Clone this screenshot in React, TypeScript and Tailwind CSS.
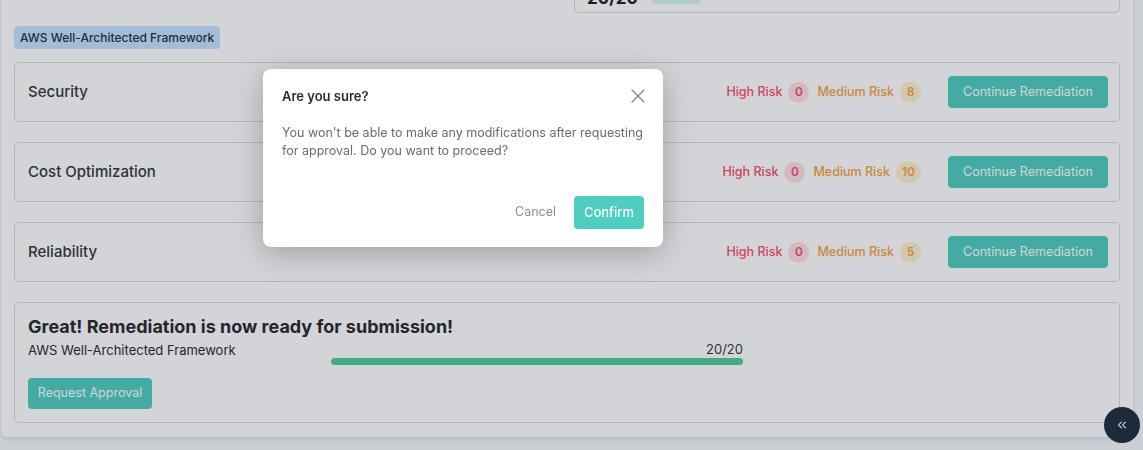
import { ChevronsLeft, X } from "lucide-react"

const pillars = [
  { name: "Security", high: 0, medium: 8 },
  { name: "Cost Optimization", high: 0, medium: 10 },
  { name: "Reliability", high: 0, medium: 5 },
]

function RiskCount({ value, tone }: { value: number; tone: "high" | "medium" }) {
  return (
    <span
      className={
        tone === "high"
          ? "flex h-[21px] min-w-[21px] items-center justify-center rounded-full bg-[#ffdfe6] px-[6px] text-[12px] font-semibold text-[#fb506b]"
          : "flex h-[21px] min-w-[21px] items-center justify-center rounded-full bg-[#fff0d0] px-[6px] text-[12px] font-semibold text-[#f7a33a]"
      }
    >
      {value}
    </span>
  )
}

function PillarRow({ name, high, medium }: { name: string; high: number; medium: number }) {
  return (
    <div className="flex h-[60px] items-center justify-between rounded-[5px] border border-[#d9d9db] pl-[13px] pr-[11px]">
      <h3 className="text-[15px] font-medium text-[#343a40]">{name}</h3>
      <div className="flex items-center">
        <div className="flex items-center gap-[6px]">
          <span className="text-[12.5px] font-medium text-[#fb506b]">High Risk</span>
          <RiskCount value={high} tone="high" />
          <span className="ml-[2px] text-[12.5px] font-medium text-[#f7a33a]">Medium Risk</span>
          <RiskCount value={medium} tone="medium" />
        </div>
        <button className="ml-[27px] h-[32px] w-[160px] rounded-[4px] bg-[#51cdc1] text-[12.5px] text-white">
          Continue Remediation
        </button>
      </div>
    </div>
  )
}

export default function App() {
  return (
    <div className="min-h-screen overflow-hidden bg-[#f6f9fc] pr-[10px] pl-px font-['Inter',sans-serif] text-[#343a40]">
      <div className="rounded-b-[6px] bg-white px-[13px] pb-[14px] shadow-[0_2px_4px_rgba(15,30,60,0.12)]">
        <div className="-mt-[35px] flex justify-end">
          <div className="flex h-[48px] w-[546px] items-end gap-[14px] rounded-[5px] border border-[#d9d9db] px-[12px] pb-[2px]">
            <span className="text-[17px] leading-[24px] font-bold text-[#222]">20/20</span>
            <span className="mb-[6px] rounded-[4px] bg-[#d6f5ea] px-[8px] text-[12px] leading-[20px] font-semibold text-[#38b383]">
              100%
            </span>
          </div>
        </div>

        <div className="mt-[13px] inline-flex h-[23px] items-center rounded-[4px] bg-[#c6e3ff] px-[6px] text-[12px] font-medium text-[#26313d]">
          AWS Well-Architected Framework
        </div>

        <div className="mt-[13px] flex flex-col gap-[20px]">
          {pillars.map((p) => (
            <PillarRow key={p.name} {...p} />
          ))}

          <div className="rounded-[5px] border border-[#d9d9db] px-[13px] pt-[11px] pb-[13px]">
            <h2 className="text-[18px] leading-[25px] font-bold text-[#2b2b30]">
              Great! Remediation is now ready for submission!
            </h2>
            <div className="mt-[2px] flex items-start">
              <span className="w-[303px] pt-[1px] text-[13px] leading-[16px] text-[#2b2b30]">
                AWS Well-Architected Framework
              </span>
              <div className="flex w-[412px] flex-col">
                <span className="self-end text-[13px] leading-[16px] text-[#343a40]">20/20</span>
                <div className="mt-px h-[7px] w-full rounded-full bg-[#4ecd9a]" />
              </div>
            </div>
            <button className="mt-[13px] h-[31px] w-[124px] rounded-[4px] bg-[#51cdc1] text-[12.5px] text-white">
              Request Approval
            </button>
          </div>
        </div>
      </div>

      <div className="fixed inset-0 bg-[rgba(10,15,35,0.18)]" />

      <div className="fixed top-[69px] left-[263px] w-[400px] rounded-[8px] bg-white px-[19px] pt-[15px] pb-[18px] shadow-[0_6px_30px_rgba(0,0,0,0.25)]">
        <div className="flex items-center justify-between">
          <h4 className="text-[13px] leading-[18px] font-semibold text-[#2b2b30]">Are you sure?</h4>
          <X size={24} strokeWidth={1.4} className="-mr-[6px] text-[#8a8a8a]" />
        </div>
        <p className="mt-[16px] text-[12.5px] leading-[18px] text-[#6b6b6b]">
          You won't be able to make any modifications after requesting for approval. Do you want to proceed?
        </p>
        <div className="mt-[36px] flex items-center justify-end gap-[8px]">
          <button className="h-[33px] px-[10px] text-[12.5px] text-[#8a8a8a]">Cancel</button>
          <button className="h-[33px] w-[70px] rounded-[4px] bg-[#4ecdc1] text-[13px] font-medium text-white">
            Confirm
          </button>
        </div>
      </div>

      <button className="fixed top-[407px] left-[1104px] flex h-[36px] w-[36px] items-center justify-center rounded-full bg-[#1e2939] text-[#dbe7ff]">
        <ChevronsLeft size={14} strokeWidth={1.75} />
      </button>
    </div>
  )
}
